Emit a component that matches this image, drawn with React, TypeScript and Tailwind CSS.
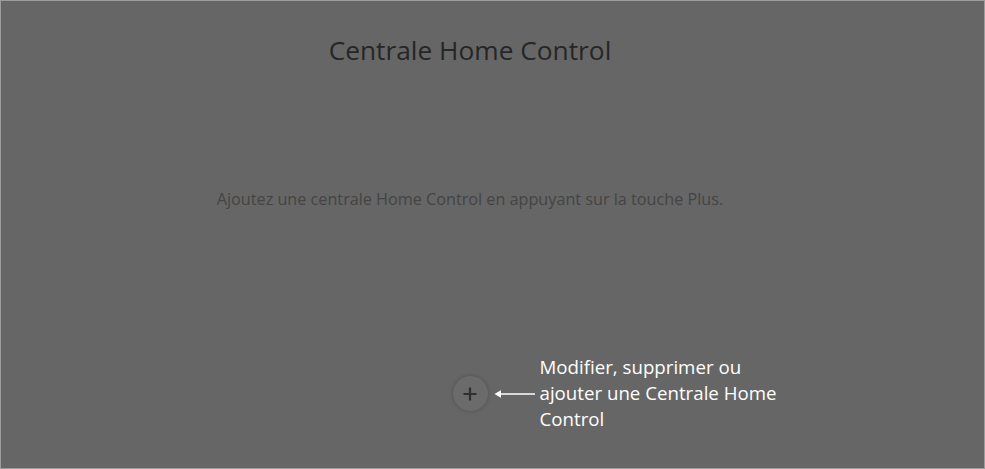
export default function App() {
  return (
    <main
      className="w-[985px] h-[469px] bg-[#666666] border border-[#9c9c9c] overflow-hidden"
      style={{ fontFamily: '"Open Sans", "Liberation Sans", sans-serif' }}
    >
      <div className="w-[938px] h-full flex flex-col items-center">
        {/* header */}
        <h1 className="mt-[32px] text-[26.3px] leading-[34px] text-[#262626]">Centrale Home Control</h1>

        {/* empty state */}
        <p className="mt-[121px] text-[16.2px] leading-[22px] text-[#444444]">
          Ajoutez une centrale Home Control en appuyant sur la touche Plus.
        </p>

        {/* add button + hint */}
        <div className="relative mt-[166px]">
          <button className="w-[35px] h-[35px] rounded-full bg-[#6b6b6b] shadow-[0_0_4px_rgba(0,0,0,0.22)] flex items-center justify-center">
            <svg width="16" height="16" viewBox="0 0 16 16">
              <path d="M8 1.5v13M1.5 8h13" stroke="#2f2f2f" strokeWidth="2.2" />
            </svg>
          </button>
          <div className="absolute left-[41px] top-[-22px] flex items-start">
            <svg width="42" height="10" viewBox="0 0 42 10" className="mt-[35px] shrink-0">
              <path d="M41 5H3" stroke="#ffffff" strokeWidth="1.6" />
              <path d="M0.5 5L7 1.2V8.8Z" fill="#ffffff" />
            </svg>
            <p className="ml-[4px] w-[250px] text-[18.7px] leading-[26px] text-white">
              Modifier, supprimer ou ajouter une Centrale Home Control
            </p>
          </div>
        </div>
      </div>
    </main>
  );
}
